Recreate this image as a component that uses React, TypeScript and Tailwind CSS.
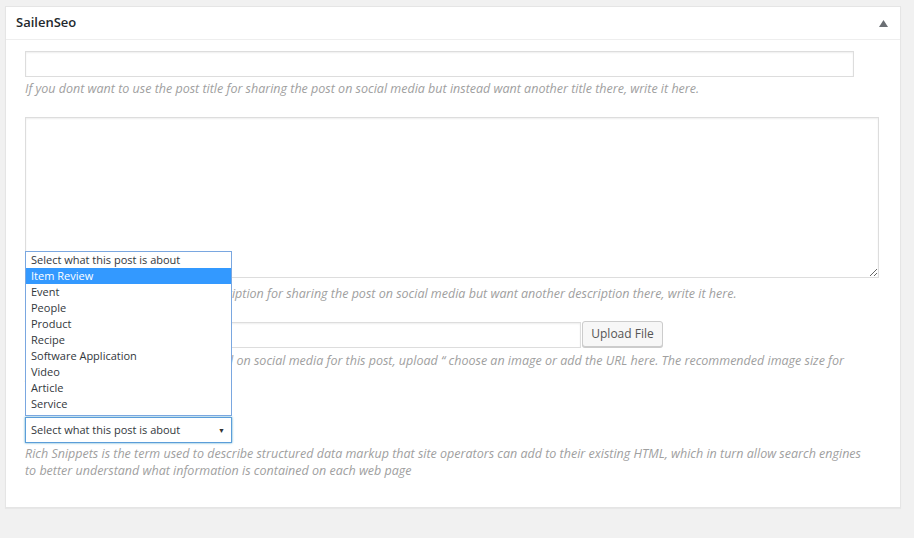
import React from 'react';

const options = [
  'Select what this post is about',
  'Item Review',
  'Event',
  'People',
  'Product',
  'Recipe',
  'Software Application',
  'Video',
  'Article',
  'Service',
];

const desc = 'text-[12.5px] leading-[17px] italic text-[#a0a0a0]';

export default function App() {
  return (
    <div className="min-h-[538px] w-[914px] bg-[#f1f1f1] pt-[6px] pl-[5px] font-['Open_Sans',sans-serif]">
      <div className="w-[896px] border border-[#e5e5e5] bg-white shadow-[0_1px_1px_rgba(0,0,0,0.04)]">
        {/* header */}
        <div className="flex h-[33px] items-center justify-between border-b border-[#eeeeee] pl-[10px] pr-[12px]">
          <h2 className="text-[13px] font-semibold text-[#23282d]">SailenSeo</h2>
          <svg width="9" height="7" viewBox="0 0 9 7">
            <path d="M4.5 0 L9 7 L0 7 Z" fill="#6b6f74" />
          </svg>
        </div>

        {/* body */}
        <div className="relative pl-[19px] pr-[20px] pb-[28px]">
          <input
            type="text"
            className="mt-[11px] block h-[26px] w-[829px] border border-[#dddddd] bg-white shadow-[inset_0_1px_2px_rgba(0,0,0,0.07)] outline-none"
          />
          <p className={`${desc} mt-[3px]`}>
            If you dont want to use the post title for sharing the post on social media but instead want another title there, write it here.
          </p>

          <textarea className="mt-[20px] block h-[161px] w-[854px] border border-[#dddddd] bg-white shadow-[inset_0_1px_2px_rgba(0,0,0,0.07)] outline-none" />
          <p className={`${desc} mt-[7px]`}>
            If you dont want to use the post description for sharing the post on social media but want another description there, write it here.
          </p>

          <div className="mt-[19px] flex items-start">
            <input
              type="text"
              className="mt-px block h-[26px] w-[556px] border border-[#dddddd] bg-white shadow-[inset_0_1px_2px_rgba(0,0,0,0.07)] outline-none"
            />
            <button className="ml-px h-[26px] w-[81px] rounded-[3px] border border-[#cccccc] bg-[#f7f7f7] text-[12px] text-[#555555] shadow-[0_1px_0_#cccccc]">
              Upload File
            </button>
          </div>
          <p className={`${desc} mt-[4px] w-[840px]`}>
            If you want any image to be displayed on social media for this post, upload “ choose an image or add the URL here. The recommended image size for sharing is 1200 x 630 pixels
          </p>

          <div className="mt-[31px] flex h-[26px] w-[207px] items-center justify-between border border-[#5b9dd9] bg-white pl-[5px] pr-[6px] text-[11px] text-[#32373c] shadow-[0_0_2px_rgba(30,140,190,0.8)]">
            <span>Select what this post is about</span>
            <span className="text-[7px] leading-none text-[#333]">▼</span>
          </div>
          <p className={`${desc} mt-[2px] w-[850px]`}>
            Rich Snippets is the term used to describe structured data markup that site operators can add to their existing HTML, which in turn allow search engines to better understand what information is contained on each web page
          </p>

          {/* open dropdown list */}
          <ul className="absolute left-[19px] top-[200px] w-[207px] border border-[#7aa7e0] bg-white pb-[3px] text-[11px] text-[#32373c]">
            {options.map((o, i) => (
              <li
                key={o}
                className={`h-[16px] pl-[5px] leading-[16px] ${i === 1 ? 'bg-[#3399ff] text-white' : ''}`}
              >
                {o}
              </li>
            ))}
          </ul>
        </div>
      </div>
    </div>
  );
}
